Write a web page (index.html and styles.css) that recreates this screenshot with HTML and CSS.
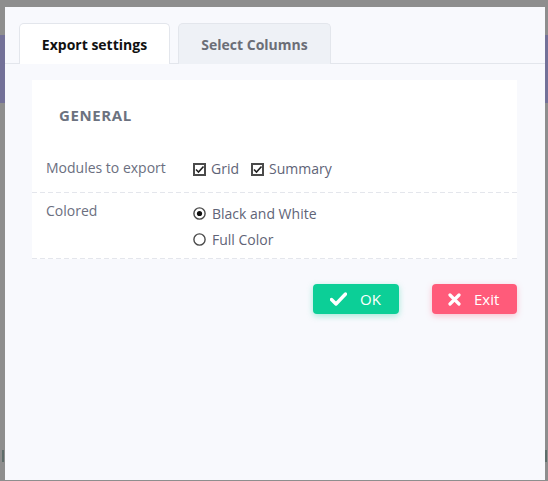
FILE: index.html
```html
<!DOCTYPE html>
<html>
<head>
<meta charset="utf-8">
<link rel="stylesheet" href="styles.css">
</head>
<body>
<div class="backdrop">
  <div class="band"></div>
  <div class="frag frag-left"></div>
  <div class="frag frag-right"></div>
</div>
<div class="dialog">
  <div class="tabs">
    <div class="tab active">Export settings</div>
    <div class="tab">Select Columns</div>
  </div>
  <div class="card">
    <div class="card-title">GENERAL</div>
    <div class="row row-first">
      <div class="label">Modules to export</div>
      <div class="opts-inline">
        <span class="opt">
          <svg class="box" width="13" height="13" viewBox="0 0 13 13"><rect x="1" y="1" width="11" height="11" fill="#fff" stroke="#4a4a4a" stroke-width="2"/><path d="M3 6.5 L5.5 9 L10.5 3.5" fill="none" stroke="#222" stroke-width="1.6"/></svg>
          Grid
        </span>
        <span class="opt">
          <svg class="box" width="13" height="13" viewBox="0 0 13 13"><rect x="1" y="1" width="11" height="11" fill="#fff" stroke="#4a4a4a" stroke-width="2"/><path d="M3 6.5 L5.5 9 L10.5 3.5" fill="none" stroke="#222" stroke-width="1.6"/></svg>
          Summary
        </span>
      </div>
    </div>
    <div class="row row-second">
      <div class="label label-colored">Colored</div>
      <div class="opts-stack">
        <span class="opt">
          <svg class="radio" width="13" height="13" viewBox="0 0 13 13"><circle cx="6.5" cy="6.5" r="5.6" fill="#fff" stroke="#4a4a4a" stroke-width="1.4"/><circle cx="6.5" cy="6.5" r="2.6" fill="#111"/></svg>
          Black and White
        </span>
        <span class="opt">
          <svg class="radio" width="13" height="13" viewBox="0 0 13 13"><circle cx="6.5" cy="6.5" r="5.6" fill="#fff" stroke="#4a4a4a" stroke-width="1.4"/></svg>
          Full Color
        </span>
      </div>
    </div>
  </div>
  <div class="actions">
    <button class="btn btn-ok">
      <svg width="17" height="14" viewBox="0 0 17 14"><path d="M1.5 7.5 L6 12 L15.5 2" fill="none" stroke="#fff" stroke-width="3.4" stroke-linecap="round" stroke-linejoin="round"/></svg>
      <span>OK</span>
    </button>
    <button class="btn btn-exit">
      <svg width="13" height="13" viewBox="0 0 13 13"><path d="M2 2 L11 11 M11 2 L2 11" fill="none" stroke="#fff" stroke-width="3.2" stroke-linecap="round"/></svg>
      <span>Exit</span>
    </button>
  </div>
</div>
</body>
</html>
```
FILE: styles.css
```css
* { box-sizing: border-box; }
html, body {
  margin: 0;
  padding: 0;
  width: 548px;
  height: 481px;
  overflow: hidden;
  background: #8e8e8e;
  font-family: "Open Sans", "Noto Sans", sans-serif;
}
.backdrop {
  position: absolute;
  inset: 0;
}
.band {
  position: absolute;
  left: 0;
  right: 0;
  top: 35px;
  height: 68px;
  background: #737198;
}
.frag {
  position: absolute;
  top: 450px;
  width: 2px;
  height: 12px;
  background: #5e6d6a;
}
.frag-left { left: 2px; }
.frag-right { left: 545px; }
.dialog {
  position: absolute;
  left: 5px;
  top: 7px;
  width: 540px;
  height: 473px;
  background: #f8f9fd;
  display: flex;
  flex-direction: column;
}
.tabs {
  display: flex;
  gap: 8px;
  padding: 16px 14px 0;
  border-bottom: 1px solid #e3e6ec;
}
.tab {
  width: 151px;
  height: 41px;
  margin-bottom: -1px;
  border: 1px solid #e3e6ec;
  border-bottom: none;
  border-radius: 5px 5px 0 0;
  background: #eef1f6;
  color: #6b6e77;
  font-weight: 700;
  font-size: 14px;
  display: flex;
  align-items: center;
  justify-content: center;
  padding-top: 1px;
}
.tab:nth-child(2) { width: 153px; }
.tab.active {
  background: #fff;
  color: #111;
}
.card {
  margin: 16px 28px 0 27px;
  background: #fff;
}
.card-title {
  padding: 25px 27px 0;
  height: 65px;
  line-height: 20px;
  font-size: 15px;
  font-weight: 700;
  color: #6c7280;
  letter-spacing: 0.6px;
}
.row {
  display: flex;
  padding: 0 14px;
  background-image: repeating-linear-gradient(to right, #e4e6ec 0 5px, transparent 5px 8px);
  background-size: 100% 1px;
  background-repeat: no-repeat;
  background-position: bottom left;
}
.row-first {
  padding-top: 13px;
  padding-bottom: 14px;
  height: 48px;
}
.row-second {
  height: 66px;
  padding-top: 7px;
}
.label {
  width: 147px;
  font-size: 14px;
  line-height: 20px;
  color: #6b6f80;
}
.label-colored { padding-top: 1px; }
.opts-inline {
  display: flex;
  gap: 12px;
  line-height: 20px;
}
.opts-stack {
  display: flex;
  flex-direction: column;
}
.opt {
  display: flex;
  align-items: center;
  gap: 5px;
  font-size: 14px;
  color: #5f6477;
}
.opts-inline .opt { height: 21px; padding-top: 1px; }
.opts-stack .opt { height: 26px; gap: 6px; }
.actions {
  display: flex;
  justify-content: flex-end;
  gap: 33px;
  margin: 25px 28px 0 0;
}
.btn {
  height: 30px;
  border: none;
  border-radius: 4px;
  color: #fff;
  font-family: "Open Sans", "Noto Sans", sans-serif;
  font-size: 15px;
  display: flex;
  align-items: center;
  padding: 0;
}
.btn-ok {
  width: 86px;
  background: #0ccf97;
  box-shadow: 0 2px 6px rgba(12, 207, 151, 0.35);
  padding-left: 17px;
  gap: 13px;
}
.btn-exit {
  width: 85px;
  background: #ff5b7a;
  box-shadow: 0 2px 6px rgba(255, 91, 122, 0.35);
  padding-left: 16px;
  gap: 13px;
}
```
